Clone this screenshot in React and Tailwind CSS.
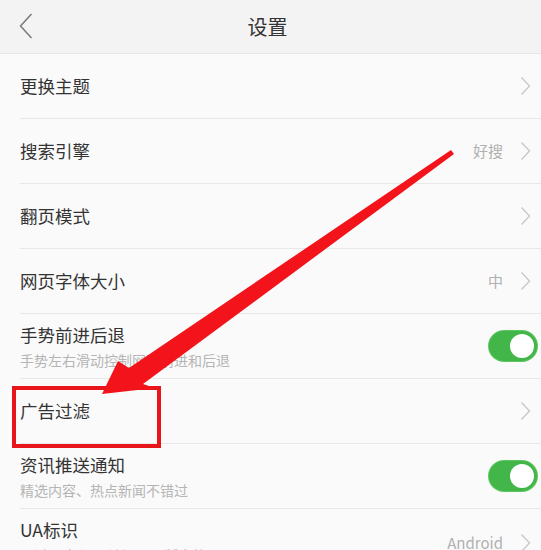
import React from "react";

const font = { fontFamily: '"Noto Sans CJK SC", "Noto Sans", sans-serif' };

function Chevron() {
  return (
    <svg width="11" height="20" viewBox="0 0 11 20" className="shrink-0">
      <path d="M1.5 1.5 L9.5 10 L1.5 18.5" fill="none" stroke="#c9c9c9" strokeWidth="1.4" />
    </svg>
  );
}

function Toggle() {
  return (
    <div className="relative -mr-[6px] h-[30px] w-[48px] rounded-full bg-[#43b649] shadow-[0_0_0_1px_#5cc760]">
      <div className="absolute right-[3px] top-[3px] h-[24px] w-[24px] rounded-full bg-white" />
    </div>
  );
}

function Row({ title, sub, value, toggle }) {
  return (
    <div className="ml-[20px] flex h-[65px] border-b border-[#e8e8e8] pr-[10px]">
      <div className={sub ? "flex flex-1 flex-col pt-[10px]" : "flex flex-1 items-center"}>
        <div className="text-[17.5px] leading-[22px] text-[#333]">{title}</div>
        {sub && <div className="mt-[5px] text-[14px] leading-[18px] text-[#b5b5b5]">{sub}</div>}
      </div>
      <div className={"flex items-center gap-[17px] " + (sub && !toggle ? "pt-[4px]" : "")}>
        {value && <span className="text-[15px] text-[#b0b0b0]">{value}</span>}
        {toggle ? <Toggle /> : <Chevron />}
      </div>
    </div>
  );
}

export default function App() {
  return (
    <div className="relative h-[550px] w-[541px] overflow-hidden bg-[#fafafa]" style={font}>
      <div className="relative flex h-[54px] items-center justify-center border-b border-[#e6e6e6] bg-[#f3f3f3]">
        <svg width="14" height="26" viewBox="0 0 14 26" className="absolute left-[19px] top-[13px]">
          <path d="M12.5 1 L1.5 13 L12.5 25" fill="none" stroke="#7a7a7a" strokeWidth="1.5" />
        </svg>
        <span className="-ml-[6px] text-[20px] text-[#333]">设置</span>
      </div>
      <Row title="更换主题" />
      <Row title="搜索引擎" value="好搜" />
      <Row title="翻页模式" />
      <Row title="网页字体大小" value="中" />
      <Row title="手势前进后退" sub="手势左右滑动控制网页前进和后退" toggle />
      <Row title="广告过滤" />
      <Row title="资讯推送通知" sub="精选内容、热点新闻不错过" toggle />
      <Row title="UA标识" sub="通过UA标识，访问不同版本的网页" value="Android" />

      <div className="absolute left-[12px] top-[386px] h-[62px] w-[149px] border-[4px] border-[#e8161b]" />
      <svg className="pointer-events-none absolute left-0 top-0" width="541" height="550" viewBox="0 0 541 550">
        <polygon
          points="102,394 118,361 129,368 451,150 454,154 143,384 155,388"
          fill="#f2141a"
        />
      </svg>
    </div>
  );
}
